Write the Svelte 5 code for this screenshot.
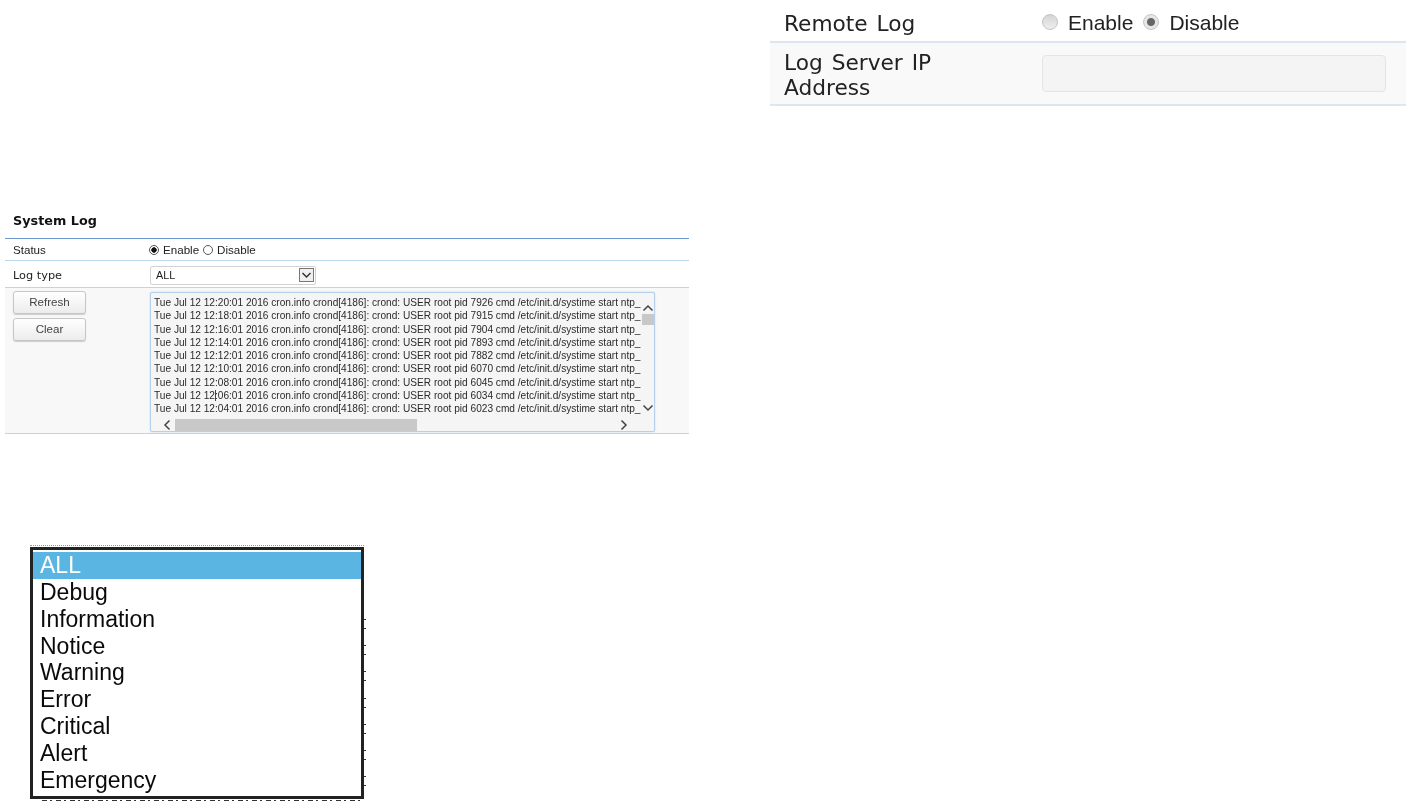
<script lang="ts">
  const logRows = [
    ['12:20:01', 7926],
    ['12:18:01', 7915],
    ['12:16:01', 7904],
    ['12:14:01', 7893],
    ['12:12:01', 7882],
    ['12:10:01', 6070],
    ['12:08:01', 6045],
    ['12:06:01', 6034],
    ['12:04:01', 6023]
  ];
  const levels = ['ALL', 'Debug', 'Information', 'Notice', 'Warning', 'Error', 'Critical', 'Alert', 'Emergency'];
</script>

<div class="page">
  <div class="left">
    <section class="system-log">
      <h2>System Log</h2>
      <div class="sl-table">
        <div class="sl-row status">
          <div class="sl-label">Status</div>
          <div class="sl-value radios">
            <input type="radio" name="status" class="radio" checked />
            <span>Enable</span>
            <input type="radio" name="status" class="radio" />
            <span>Disable</span>
          </div>
        </div>
        <div class="sl-row logtype">
          <div class="sl-label mono">Log type</div>
          <div class="sl-value">
            <div class="select">
              <span>ALL</span>
              <svg class="select-arrow" width="15" height="14" viewBox="0 0 15 14">
                <rect x="0.5" y="0.5" width="14" height="13" fill="#f0f0f0" stroke="#777" />
                <path d="M3.5 5 L7.5 9 L11.5 5" fill="none" stroke="#333" stroke-width="1.5" />
              </svg>
            </div>
          </div>
        </div>
        <div class="sl-row logs">
          <div class="sl-label buttons">
            <button type="button">Refresh</button>
            <button type="button">Clear</button>
          </div>
          <div class="sl-value">
            <div class="logbox">
              <div class="loglines">
                {#each logRows as [time, pid], i}
                  <div class="logline">Tue Jul 12 12{#if i === 7}<span class="caret"></span>{/if}{String(time).slice(2)} 2016 cron.info crond[4186]: crond: USER root pid {pid} cmd /etc/init.d/systime start ntp_</div>
                {/each}
              </div>
              <div class="vbar">
                <svg width="12" height="8" viewBox="0 0 12 8"><path d="M1.5 6.5 L6 2 L10.5 6.5" fill="none" stroke="#444" stroke-width="1.5" /></svg>
                <div class="vthumb"></div>
                <svg class="vdown" width="12" height="8" viewBox="0 0 12 8"><path d="M1.5 1.5 L6 6 L10.5 1.5" fill="none" stroke="#444" stroke-width="1.5" /></svg>
              </div>
              <div class="hbar">
                <svg width="8" height="12" viewBox="0 0 8 12"><path d="M6.5 1.5 L2 6 L6.5 10.5" fill="none" stroke="#444" stroke-width="1.5" /></svg>
                <div class="hthumb"></div>
                <svg class="hright" width="8" height="12" viewBox="0 0 8 12"><path d="M1.5 1.5 L6 6 L1.5 10.5" fill="none" stroke="#444" stroke-width="1.5" /></svg>
              </div>
            </div>
          </div>
        </div>
      </div>
    </section>

    <div class="level-wrap">
      <div class="level-list">
        {#each levels as level, i}
          <div class="level" class:selected={i === 0}>{level}</div>
        {/each}
      </div>
    </div>
  </div>

  <section class="remote">
    <div class="rm-row first">
      <div class="rm-label">Remote Log</div>
      <div class="rm-radios">
        <input type="radio" name="remote" class="rm-radio" disabled />
        <span class="rm-enable">Enable</span>
        <input type="radio" name="remote" class="rm-radio" checked disabled />
        <span>Disable</span>
      </div>
    </div>
    <div class="rm-row second">
      <div class="rm-label">Log Server IP<br />Address</div>
      <input class="rm-input" type="text" disabled />
    </div>
  </section>
</div>

<style>
  :global(body) {
    margin: 0;
    background: #fff;
  }

  .page {
    display: grid;
    grid-template-columns: 770px 636px;
    width: 1406px;
    height: 801px;
    overflow: hidden;
  }

  .left {
    padding-left: 5px;
    padding-top: 212px;
  }

  /* system log panel */
  .system-log {
    width: 684px;
    filter: blur(0.45px);
  }

  h2 {
    margin: 0 0 17px 8px;
    font: bold 12.8px/17px "DejaVu Sans", sans-serif;
    color: #111;
    height: 9px;
  }

  .sl-table {
    border-top: 1px solid #6f97d0;
  }

  .sl-row {
    display: grid;
    grid-template-columns: 145px 1fr;
    border-bottom: 1px solid #b8d6ec;
    font: 11.6px "Liberation Sans", sans-serif;
    color: #222;
    box-sizing: border-box;
  }

  .status {
    height: 22px;
    align-items: center;
  }

  .logtype {
    height: 27px;
    align-items: center;
    background: #fff;
    padding-top: 2px;
  }

  .logs {
    height: 146px;
    background: #f8f8f8;
  }

  .sl-label {
    padding-left: 8px;
  }

  .mono {
    font: 11.3px "DejaVu Sans", sans-serif;
  }

  .radios {
    display: flex;
    align-items: center;
    gap: 4px;
    margin-left: -1px;
  }

  .radio {
    appearance: none;
    margin: 0;
    width: 10px;
    height: 10px;
    border: 1px solid #555;
    border-radius: 50%;
    background: #fff;
    box-sizing: border-box;
  }

  .radio:checked {
    background: radial-gradient(circle, #111 0 2.4px, #fff 3px);
  }

  .select {
    display: flex;
    align-items: center;
    justify-content: space-between;
    width: 166px;
    height: 19px;
    padding: 0 1px 0 5px;
    box-sizing: border-box;
    border: 1px solid #d2d2d2;
    border-radius: 2px;
    background: #fff;
    font-size: 10.8px;
  }

  .buttons {
    display: flex;
    flex-direction: column;
    gap: 4px;
    padding-top: 3px;
  }

  button {
    width: 73px;
    height: 23px;
    padding: 0 0 2px;
    border: 1px solid #c6c6c6;
    border-radius: 3px;
    background: linear-gradient(#fff, #ececec);
    box-shadow: 0 1px 1px #ccc;
    font: 11.6px "Liberation Sans", sans-serif;
    color: #444;
  }

  .logbox {
    display: grid;
    grid-template-columns: 1fr 13px;
    grid-template-rows: 1fr 13px;
    width: 505px;
    height: 140px;
    margin-top: 4px;
    box-sizing: border-box;
    border: 1px solid #b4d0ea;
    border-radius: 2px;
    background: #f5f5f5;
    box-shadow: 0 0 2px #bcd6ee;
  }

  .loglines {
    padding: 3px 0 0 3px;
    overflow: hidden;
  }

  .logline {
    height: 13.25px;
    line-height: 13.25px;
    font-size: 10.15px;
    white-space: nowrap;
    color: #2a2a2a;
  }

  .caret {
    display: inline-block;
    width: 0;
    height: 11px;
    margin-right: -1px;
    border-left: 1px solid #444;
    vertical-align: -2px;
  }

  .vbar {
    display: flex;
    flex-direction: column;
    align-items: center;
    padding-top: 11px;
  }

  .vthumb {
    width: 12px;
    height: 11px;
    margin-top: 2px;
    background: #c8c8c8;
  }

  .vdown {
    margin-top: auto;
    margin-bottom: 6px;
  }

  .hbar {
    grid-column: 1 / 3;
    display: flex;
    align-items: center;
    padding-left: 12px;
    padding-right: 26px;
  }

  .hthumb {
    width: 242px;
    height: 12px;
    margin-left: 4px;
    background: #c8c8c8;
  }

  .hright {
    margin-left: auto;
  }

  /* level dropdown */
  .level-wrap {
    position: relative;
    width: 334px;
    margin-left: 25px;
    margin-top: 111px;
    padding-top: 1px;
    border-top: 1px dotted #999;
    filter: blur(0.25px);
  }

  /* ticks left by the cropped page behind the list */
  .level-wrap::after {
    content: '';
    position: absolute;
    top: 73px;
    right: -2px;
    width: 2px;
    height: 183px;
    background: repeating-linear-gradient(#333 0 1px, transparent 1px 9px, #333 9px 10px, transparent 10px 26.2px);
  }

  .level-wrap::before {
    content: '';
    position: absolute;
    top: 254px;
    left: 12px;
    width: 320px;
    height: 2px;
    background: repeating-linear-gradient(90deg, #333 0 5px, transparent 5px 8px, #333 8px 10px, transparent 10px 14px);
  }

  .level-list {
    height: 252px;
    padding-top: 2px;
    box-sizing: border-box;
    border: 3px solid #222;
    background: #fff;
    font: 23px/26.85px "Liberation Sans", sans-serif;
    color: #0a0a0a;
  }

  .level {
    padding-left: 7px;
  }

  .selected {
    background: #5bb5e3;
    color: #fff;
  }

  /* remote log panel */
  .remote {
    filter: blur(0.3px);
  }

  .rm-row {
    display: grid;
    grid-template-columns: 258px 1fr;
    align-items: center;
    padding: 0 20px 0 14px;
    font: 21.7px/25px "DejaVu Sans", sans-serif;
    word-spacing: 2px;
    color: #222;
    box-sizing: border-box;
  }

  .first {
    height: 43px;
    padding-top: 5px;
    border-bottom: 2px solid #dbe6f1;
  }

  .second {
    height: 63px;
    background: #f9f9f9;
    border-bottom: 2px solid #dbe6f1;
  }

  .second .rm-label {
    padding-top: 2px;
  }

  .rm-radios {
    display: flex;
    align-items: center;
    font: 21px "Liberation Sans", sans-serif;
    gap: 10px;
    margin-top: -1px;
  }

  .rm-radio {
    appearance: none;
    margin: -2px 0 0;
    width: 16px;
    height: 16px;
    border: 1px solid #c4c4c4;
    border-radius: 50%;
    background: linear-gradient(#d5d5d5, #eee);
  }

  .rm-radio:checked {
    background: radial-gradient(circle, #666 0 3.5px, #e6e6e6 4.5px);
  }

  .rm-enable {
    margin-right: 0;
  }

  .rm-input {
    width: 344px;
    height: 37px;
    padding: 0;
    box-sizing: border-box;
    border: 1px solid #e4e4e4;
    border-radius: 4px;
    background: #f4f4f4;
  }
</style>
